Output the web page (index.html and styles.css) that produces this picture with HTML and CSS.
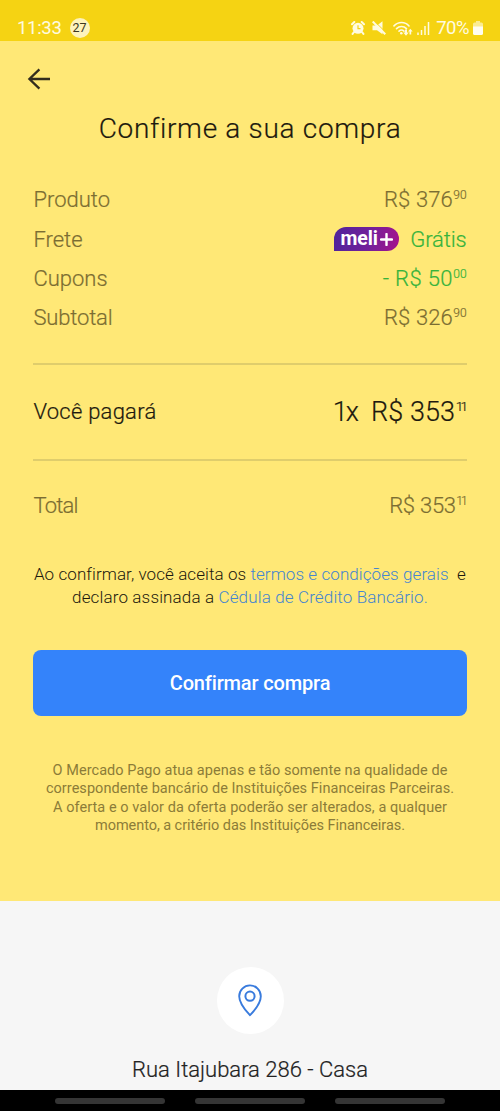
FILE: index.html
```
<!DOCTYPE html>
<html lang="pt-BR">
<head>
<meta charset="utf-8">
<meta name="viewport" content="width=device-width, initial-scale=1">
<title>Confirme a sua compra</title>
<link rel="stylesheet" href="styles.css">
</head>
<body>
<div class="screen">
  <div class="status">
    <span class="clock">11:33</span>
    <span class="count">27</span>
    <div class="status-icons">
      <svg class="alarm" width="14" height="14" viewBox="0 0 14 14"><path d="M1 3.300 3.300 1M13 3.300 10.700 1M3 11 1.600 12.900M11 11l1.400 1.900" stroke="#fffbe0" stroke-width="2" stroke-linecap="round"/><circle cx="7" cy="7.300" r="5.500" fill="#fffbe0"/><path d="M7 4.200v3.400h2.500" fill="none" stroke="#f5d313" stroke-width="1.200"/></svg>
      <svg class="mute" width="14" height="14" viewBox="0 0 14 14"><path d="M.500 4.500H5L10.500.300v13L5 9.300H.500z" fill="#fffbe0"/><path d="M2-.2 15 12.500" stroke="#f5d313" stroke-width="1"/><path d="M.700.500 13.300 13.200" stroke="#fffbe0" stroke-width="2"/></svg>
      <svg class="wifi" width="20" height="15" viewBox="0 0 20 15"><g fill="none" stroke="#fffbe0" stroke-width="1.600" stroke-linecap="round"><path d="M1 4.900C5.200.300 12 .300 16 4.900"/><path d="M3.500 7.600c2.800-2.900 7.200-2.900 10 0"/><path d="M6 10.200c1.500-1.400 3.500-1.400 5 0"/></g><circle cx="8.300" cy="12.200" r="1.300" fill="#fffbe0"/><path d="M12 8.500h2v3h1.700L13 14.700l-2.700-3.200H12zM16.500 13.500v-3H15L17.300 7.700 19.700 10.500h-1.500v3z" fill="#fffbe0"/></svg>
      <svg class="signal" width="13" height="14" viewBox="0 0 13 14"><path d="M1 11.500V14M4.500 9v5M8 5v9M11.500 1v13" stroke="#fffbe0" stroke-width="1.500"/></svg>
      <span class="percent">70%</span>
      <svg class="battery" width="10" height="14" viewBox="0 0 10 14"><path d="M3 0h4v1.500h1.500Q10 1.500 10 3v9.300Q10 14 8.500 14h-7Q0 14 0 12.300V3Q0 1.500 1.500 1.500H3z" fill="#fbec92"/><path d="M0 5.500h10v6.800Q10 14 8.500 14h-7Q0 14 0 12.300z" fill="#fffdf0"/></svg>
    </div>
  </div>
  <main class="checkout">
    <div class="toolbar">
      <svg width="24" height="24" viewBox="0 0 24 24"><path d="M12.400 2.300 2.400 12l10 9.700M2.400 12H23" fill="none" stroke="#332d1d" stroke-width="2.300"/></svg>
    </div>
    <h1>Confirme a sua compra</h1>
    <div class="summary">
      <div class="row"><span>Produto</span><span class="price">R$ 376<sup>90</sup></span></div>
      <div class="row"><span>Frete</span><span class="free"><b class="meli">meli<svg width="13" height="13" viewBox="0 0 13 13"><path d="M6.500 1v11M1 6.500h11" stroke="#fff" stroke-width="2.400" stroke-linecap="round"/></svg></b>Grátis</span></div>
      <div class="row"><span>Cupons</span><span class="price discount">- R$ 50<sup>00</sup></span></div>
      <div class="row"><span class="subtotal">Subtotal</span><span class="price">R$ 326<sup>90</sup></span></div>
    </div>
    <div class="row pay"><span>Você pagará</span><span class="installment"><span class="times">1x</span>R$ 353<sup class="ones">11</sup></span></div>
    <div class="row total"><span class="total-label">Total</span><span class="price total-price">R$ 353<sup class="ones">11</sup></span></div>
    <p class="terms">Ao confirmar, você aceita os <a>termos e condições gerais</a>&nbsp; e<br><span class="line2">declaro assinada a <a>Cédula de Crédito Bancário.</a></span></p>
    <button class="confirm" type="button">Confirmar compra</button>
    <p class="legal">O Mercado Pago atua apenas e tão somente na qualidade de<br>correspondente bancário de Instituições Financeiras Parceiras.<br>A oferta e o valor da oferta poderão ser alterados, a qualquer<br><span class="last">momento, a critério das Instituições Financeiras.</span></p>
  </main>
  <section class="address">
    <div class="pin"><svg width="24" height="33" viewBox="0 0 24 33"><path d="M12 31.200C8.500 27.500 1.200 20 1.200 12.200a10.800 10.800 0 0 1 21.600 0C22.800 20 15.500 27.500 12 31.200z" fill="none" stroke="#397bdd" stroke-width="1.900" stroke-linejoin="round"/><circle cx="12" cy="12.200" r="4.600" fill="none" stroke="#397bdd" stroke-width="2"/></svg></div>
    <div class="street">Rua Itajubara 286 - Casa</div>
  </section>
  <div class="navbar"><i></i><i></i><i></i></div>
</div>
</body>
</html>
```
FILE: styles.css
```
* { box-sizing: border-box; }
body { margin: 0; font-family: Roboto, "Liberation Sans", sans-serif; font-weight: 300; }
.screen { width: 500px; height: 1111px; display: flex; flex-direction: column; overflow: hidden; }

.status { height: 41px; flex: none; background: #f5d313; color: #fffbe0; display: flex; align-items: center; padding: 15px 17px 0; }
.clock { font-size: 18.500px; font-weight: 400; letter-spacing: -.3px; }
.count { width: 20px; height: 20px; margin-left: 8px; border-radius: 50%; background: #fdf3bc; color: #3c3720; font-size: 12.500px; font-weight: 400; line-height: 20px; text-align: center; }
.status-icons { margin-left: auto; display: flex; align-items: center; }
.mute { margin-left: 7px; }
.wifi { margin-left: 7px; }
.signal { margin-left: 4px; }
.percent { margin-left: 6px; font-size: 18.500px; font-weight: 400; letter-spacing: -.5px; }
.battery { margin-left: 4px; }

.checkout { height: 860px; flex: none; background: #ffe876; padding: 0 33.400px; color: #1d190e; }
.toolbar { height: 76px; margin-left: -6.500px; display: flex; align-items: center; }
.toolbar svg { display: block; }
h1 { margin: -8px 0 0; height: 40px; line-height: 40px; font-size: 28px; font-weight: 300; letter-spacing: .7px; text-align: center; color: #1d190e; }
h1, .row, .street { -webkit-text-stroke: .2px currentColor; }

.summary { padding: 31.200px 0 25.400px; border-bottom: 2px solid #dfcd6c; }
.row { display: flex; justify-content: space-between; align-items: center; height: 39.300px; font-size: 22px; color: #7b6d32; white-space: nowrap; }
sup { font-size: 12px; line-height: 0; vertical-align: 8px; letter-spacing: 0; margin-left: .5px; }
.ones { letter-spacing: -2px; margin-right: 1px; }
.price { letter-spacing: .1px; }
.subtotal { letter-spacing: -.15px; }
.free { display: flex; align-items: center; gap: 11px; color: #36b33c; letter-spacing: -.1px; }
.discount { color: #36b33c; letter-spacing: .35px; }
.meli { width: 65px; height: 24px; display: flex; align-items: center; justify-content: center; gap: 2px; border-radius: 12px 12px 12px 0; background: linear-gradient(100deg, #4f249b, #73209a 55%, #a7128c); color: #fff; font: 700 19.500px/24px Roboto, sans-serif; letter-spacing: -.1px; -webkit-text-stroke: 0; }
.pay { height: 96px; color: #1d190e; border-bottom: 2px solid #dfcd6c; letter-spacing: .25px; }
.installment { font-size: 27px; letter-spacing: .1px; }
.installment sup { font-size: 13.500px; vertical-align: 10px; letter-spacing: -2.500px; }
.times { margin-right: 14px; letter-spacing: -2px; }
.total { height: 90px; }
.total-label { letter-spacing: -.8px; }
.total-price { letter-spacing: -.25px; }

.terms { margin: 12.500px -10px 0; font-size: 17px; line-height: 22.500px; letter-spacing: .08px; text-align: center; white-space: nowrap; }
.line2 { letter-spacing: .14px; }
.terms a { color: #4585cf; }
.confirm { display: block; width: 100%; height: 66.500px; margin: 41.700px 0 0; padding: 0; border: 0; border-radius: 8px; background: #3483fa; color: #fff; font: 500 20px Roboto, sans-serif; letter-spacing: -.15px; }
.legal { margin: 45.500px -10px 0; font-size: 14.500px; line-height: 18.500px; font-weight: 400; letter-spacing: .05px; text-align: center; white-space: nowrap; color: #8c7c38; }
.last { letter-spacing: -.06px; }

.address { height: 189px; flex: none; background: #f6f6f6; display: flex; flex-direction: column; align-items: center; padding-top: 66px; color: #222; }
.pin { width: 67px; height: 67px; border-radius: 50%; background: #fff; display: flex; align-items: center; justify-content: center; }
.street { margin-top: 21px; font-size: 22px; line-height: 30px; }
.navbar { height: 21px; flex: none; background: #000; display: flex; justify-content: center; align-items: center; gap: 30px; }
.navbar i { width: 110px; height: 6px; border-radius: 3px; background: #353535; }
```
